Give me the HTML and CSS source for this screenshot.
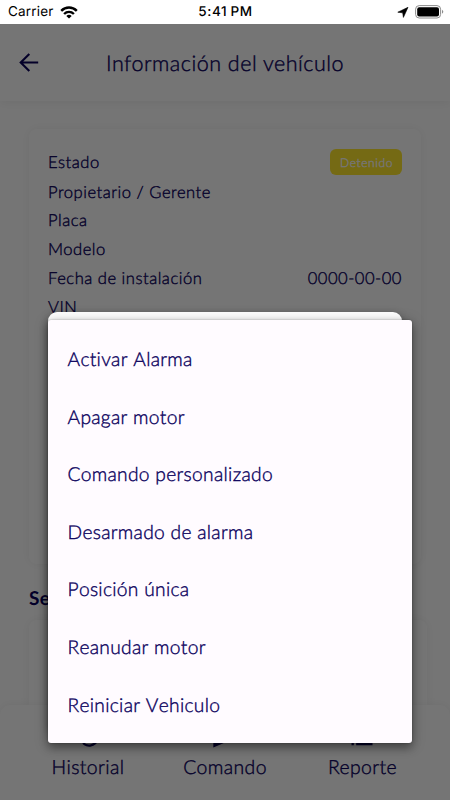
FILE: index.html
```html
<!DOCTYPE html>
<html lang="es">
<head>
<meta charset="utf-8">
<title>Información del vehículo</title>
<link rel="stylesheet" href="styles.css">
</head>
<body>
<div class="phone">
  <header class="status">
    <div class="carrier"><span>Carrier</span>
      <svg width="18" height="13" viewBox="0 0 18 13" fill="none" stroke="#000" stroke-width="2.4"><path d="M1.2 4.9C5.6.4 12.4.4 16.8 4.9M4.1 8C6.9 5.2 11.1 5.2 13.9 8"/><path d="M9 12.6 6.3 9.9Q9 7.7 11.7 9.9Z" fill="#000" stroke="none"/></svg>
    </div>
    <div class="clock">5:41 PM</div>
    <div class="power">
      <svg width="12" height="11" viewBox="0 0 12 11"><path d="M11 .3 6.4 10.4 5.7 5.8.8 5.2Z" fill="#000" stroke="#000" stroke-width=".6" stroke-linejoin="round"/></svg>
      <svg width="29" height="14" viewBox="0 0 29 14"><rect x=".6" y=".6" width="25" height="12.4" rx="3.6" fill="none" stroke="#8c8c8c"/><rect x="2.2" y="2.2" width="21.8" height="9.2" rx="2" fill="#000"/><path d="M27 4.8Q29.6 6.8 27 8.8Z" fill="#8c8c8c"/></svg>
    </div>
  </header>
  <main class="app">
    <div class="appbar">
      <svg class="back" width="20" height="20" viewBox="0 0 20 20" fill="none" stroke="#0a0059" stroke-width="2.1"><path d="M19.2 9.5H2M10.3.9 1.7 9.5l8.6 8.6"/></svg>
      <h1>Información del vehículo</h1>
    </div>
    <section class="card">
      <div class="row first"><span>Estado</span><span class="badge">Detenido</span></div>
      <div class="row"><span>Propietario / Gerente</span></div>
      <div class="row"><span>Placa</span></div>
      <div class="row"><span>Modelo</span></div>
      <div class="row"><span>Fecha de instalación</span><span>0000-00-00</span></div>
      <div class="row"><span>VIN</span></div>
    </section>
    <h2>Se</h2>
    <section class="card sensors"></section>
    <nav class="tabs">
      <div class="tab history"><svg width="26" height="28" viewBox="0 0 24 24" fill="#0a0059"><path d="M13 3a9 9 0 0 0-9 9H1l3.9 3.9L9 12H6a7 7 0 1 1 2.1 4.9l-1.4 1.4A9 9 0 1 0 13 3z"/></svg><span>Historial</span></div>
      <div class="tab command"><svg width="28" height="28" viewBox="0 0 24 24" fill="#0a0059"><path d="M2 21 23 12 2 3v7l15 2-15 2z"/></svg><span>Comando</span></div>
      <div class="tab report"><svg width="28" height="28" viewBox="0 0 24 24" fill="#0a0059"><path d="M3 5h2v3H3zm0 6h2v3H3zm0 5h2v3H3zM7 5h14v3H7zm0 6h14v3H7zm0 5h14v3H7z"/></svg><span>Reporte</span></div>
    </nav>
    <div class="scrim"></div>
    <div class="dialog"></div>
    <ul class="menu">
      <li>Activar Alarma</li>
      <li>Apagar motor</li>
      <li>Comando personalizado</li>
      <li>Desarmado de alarma</li>
      <li>Posición única</li>
      <li>Reanudar motor</li>
      <li>Reiniciar Vehiculo</li>
    </ul>
  </main>
</div>
</body>
</html>
```
FILE: styles.css
```css
* { box-sizing: border-box; }
body { margin: 0; background: #fff; color: #0a005c; font-family: Lato, sans-serif; font-weight: 300; -webkit-text-stroke: .38px; text-rendering: geometricPrecision; }
.phone { width: 450px; height: 800px; overflow: hidden; display: flex; flex-direction: column; }
.status { height: 24px; flex: none; display: grid; grid-template-columns: 1fr auto 1fr; align-items: center; padding: 0 6px 0 8px; color: #000; font-family: Inter, sans-serif; font-size: 13.5px; font-weight: 400; -webkit-text-stroke: 0; }
.carrier { display: flex; align-items: center; gap: 6px; letter-spacing: .2px; }
.clock { font-weight: 500; letter-spacing: .6px; word-spacing: -1px; margin-right: 1px; }
.power { display: flex; justify-content: flex-end; align-items: center; gap: 6px; }
.status svg { display: block; }
.app { position: relative; flex: 1; display: flex; flex-direction: column; overflow: hidden; background: #fff; }
.appbar { height: 77px; flex: none; display: grid; grid-template-columns: 48px 1fr 48px; align-items: center; box-shadow: 0 2px 10px rgba(0,0,0,.06); }
.back { margin-left: 19px; }
h1 { margin: 0; text-align: center; font-size: 21.5px; font-weight: 300; letter-spacing: .5px; white-space: nowrap; }
.card { flex: none; height: 435px; margin: 28px 29px 0; padding: 19px 19px 0; border-radius: 8px; background: #fff; box-shadow: 0 0 11px rgba(0,0,0,.06); }
.row { height: 28.8px; display: flex; justify-content: space-between; align-items: center; font-size: 16.6px; letter-spacing: .5px; white-space: nowrap; }
.row.first { height: 29.2px; align-items: flex-start; line-height: 28px; }
.badge { width: 72px; height: 26px; margin-top: 1px; padding-left: 1px; border-radius: 6px; background: #ffe82d; color: #fff; text-align: center; font-size: 12px; line-height: 27px; letter-spacing: .6px; }
h2 { margin: 22px 29px 0; font-size: 19px; line-height: 25px; font-weight: 700; letter-spacing: .3px; -webkit-text-stroke: 0; }
.sensors { height: 140px; margin: 9px 23px 0 29px; }
.tabs { position: absolute; left: 0; right: 0; bottom: 0; height: 95px; display: grid; grid-template-columns: 175px 99px 176px; border-radius: 10px 10px 0 0; background: #fff; box-shadow: 0 0 10px rgba(0,0,0,.06); }
.tab { display: flex; flex-direction: column; align-items: center; padding-top: 18px; font-size: 19.4px; line-height: 24px; letter-spacing: .4px; }
.tab span { margin-top: 5px; padding-left: 1px; }
.scrim { position: absolute; inset: 0; background: rgba(0,0,0,.54); }
.dialog { position: absolute; left: 48px; top: 288px; width: 354px; height: 420px; border-radius: 9px; background: #fff; box-shadow: 0 2px 8px rgba(0,0,0,.3); }
.menu { position: absolute; left: 48px; top: 296px; width: 364px; height: 422.5px; margin: 0; padding: 10.8px 19.5px 0; list-style: none; border-radius: 3px; background: #fffbff; box-shadow: 0 5px 9px rgba(0,0,0,.3), 0 2px 14px rgba(0,0,0,.25), 0 0 2px rgba(0,0,0,.3); }
.menu li { height: 57.6px; display: flex; align-items: center; font-size: 19.2px; font-kerning: none; letter-spacing: .3px; white-space: nowrap; }
```
